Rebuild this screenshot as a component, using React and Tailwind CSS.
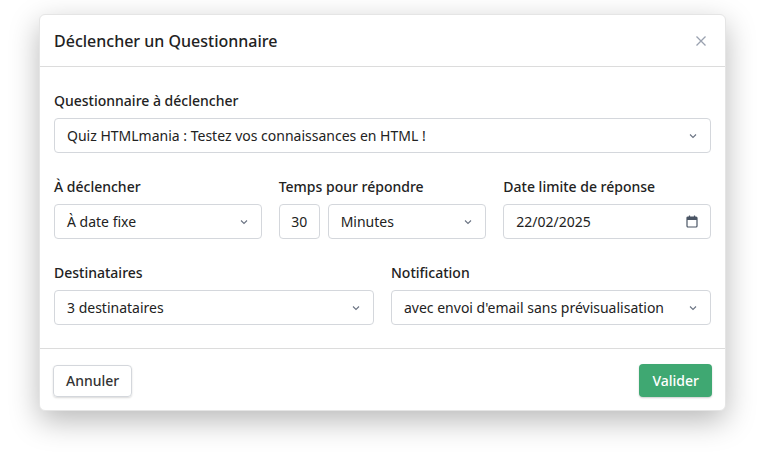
import React from "react";

const Chev = () => (
  <svg width="10" height="10" viewBox="0 0 10 10" className="text-gray-500"><path d="M2 3.5l3 3 3-3" fill="none" stroke="currentColor" strokeWidth="1.1" /></svg>
);

const Sel = ({ children, className = "" }) => (
  <div className={"h-[35px] border border-[#d4d7dc] rounded-[4px] flex items-center justify-between pl-3 pr-3 text-[14px] text-[#222] " + className}>
    <span>{children}</span>
    <Chev />
  </div>
);

const Label = ({ children }) => <div className="text-[14px] font-medium text-[#222] mb-[7px] leading-[20px]">{children}</div>;

export default function App() {
  return (
    <div className="w-[764px] h-[475px] bg-white relative" style={{ fontFamily: '"Noto Sans", "Open Sans", sans-serif' }}>
      <div className="absolute left-[39px] top-[14px] w-[687px] h-[397px] bg-white rounded-[6px] shadow-[0_10px_30px_rgba(0,0,0,0.28)] border border-[#e5e5e5] flex flex-col">
        <div className="h-[52px] flex items-center justify-between px-[14px] border-b border-[#dcdcdc]">
          <span className="text-[16px] font-medium text-[#222]">Déclencher un Questionnaire</span>
          <svg width="12" height="12" viewBox="0 0 12 12" className="text-gray-400 mr-[4px]"><path d="M1.5 1.5l9 9M10.5 1.5l-9 9" stroke="currentColor" strokeWidth="1.3" /></svg>
        </div>
        <div className="px-[14px] pt-[24px] flex-1 flex flex-col">
          <Label>Questionnaire à déclencher</Label>
          <Sel>Quiz HTMLmania : Testez vos connaissances en HTML !</Sel>
          <div className="grid grid-cols-3 gap-[17px] mt-[24px]">
            <div><Label>À déclencher</Label><Sel>À date fixe</Sel></div>
            <div>
              <Label>Temps pour répondre</Label>
              <div className="flex gap-[8px]">
                <div className="w-[41px] h-[35px] border border-[#d4d7dc] rounded-[4px] flex items-center justify-center text-[14px] text-[#222]">30</div>
                <Sel className="flex-1">Minutes</Sel>
              </div>
            </div>
            <div>
              <Label>Date limite de réponse</Label>
              <div className="h-[35px] border border-[#d4d7dc] rounded-[4px] flex items-center justify-between px-3 text-[14px] text-[#222]">
                <span>22/02/2025</span>
                <svg width="12" height="13" viewBox="0 0 12 13" className="text-gray-600"><rect x="1" y="2" width="10" height="10" rx="1" fill="none" stroke="currentColor" strokeWidth="1.2" /><rect x="1" y="2" width="10" height="3" fill="currentColor" /><path d="M3.5 0.5v2M8.5 0.5v2" stroke="currentColor" strokeWidth="1.2" /></svg>
              </div>
            </div>
          </div>
          <div className="grid grid-cols-2 gap-[17px] mt-[24px]">
            <div><Label>Destinataires</Label><Sel>3 destinataires</Sel></div>
            <div><Label>Notification</Label><Sel>avec envoi d'email sans prévisualisation</Sel></div>
          </div>
        </div>
        <div className="h-[62px] border-t border-[#dcdcdc] flex items-center justify-between pl-[13px] pr-[13px] pt-[2px]">
          <div className="h-[32px] px-[12px] border border-[#d4d7dc] rounded-[4px] shadow-[0_1px_2px_rgba(0,0,0,0.15)] flex items-center text-[14px] font-medium text-[#333]">Annuler</div>
          <div className="h-[33px] px-[13px] bg-[#3fa872] rounded-[4px] shadow-[0_1px_2px_rgba(0,0,0,0.2)] flex items-center text-[14px] font-medium text-white">Valider</div>
        </div>
      </div>
    </div>
  );
}
